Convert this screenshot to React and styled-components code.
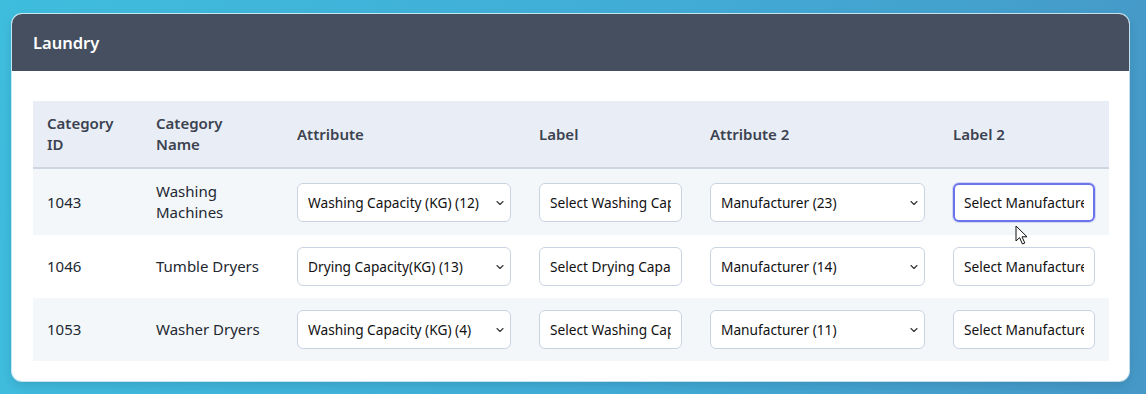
import React from 'react'
import styled, { createGlobalStyle } from 'styled-components'
import { ChevronDown } from 'lucide-react'

const rows = [
  { id: '1043', name: 'Washing Machines', attr: 'Washing Capacity (KG) (12)', label: 'Select Washing Capacity', attr2: 'Manufacturer (23)', label2: 'Select Manufacturer', focused: true },
  { id: '1046', name: 'Tumble Dryers', attr: 'Drying Capacity(KG) (13)', label: 'Select Drying Capacity', attr2: 'Manufacturer (14)', label2: 'Select Manufacturer' },
  { id: '1053', name: 'Washer Dryers', attr: 'Washing Capacity (KG) (4)', label: 'Select Washing Capacity', attr2: 'Manufacturer (11)', label2: 'Select Manufacturer' },
]

const widths = [109, 141, 242, 171, 243, 170]

const App = () => {
  return (
    <Page>
      <GlobalStyle />
      <Card>
        <CardHeader>Laundry</CardHeader>
        <CardBody>
          <Table>
            <colgroup>
              {widths.map((w, i) => <col key={i} style={{ width: w }} />)}
            </colgroup>
            <thead>
              <tr>
                <Th>Category ID</Th>
                <Th>Category Name</Th>
                <Th>Attribute</Th>
                <Th>Label</Th>
                <Th>Attribute 2</Th>
                <Th>Label 2</Th>
              </tr>
            </thead>
            <tbody>
              {rows.map((r, i) => (
                <Row key={r.id} striped={i % 2 === 0}>
                  <Td>{r.id}</Td>
                  <Td>{r.name}</Td>
                  <Td>
                    <SelectWrap>
                      <Select defaultValue={r.attr}>
                        <option>{r.attr}</option>
                      </Select>
                      <Chevron size={12} strokeWidth={2.2} />
                    </SelectWrap>
                  </Td>
                  <Td>
                    <Input readOnly value={r.label} />
                  </Td>
                  <Td>
                    <SelectWrap>
                      <Select defaultValue={r.attr2}>
                        <option>{r.attr2}</option>
                      </Select>
                      <Chevron size={12} strokeWidth={2.2} />
                    </SelectWrap>
                  </Td>
                  <Td>
                    <InputWrap>
                      <Input readOnly value={r.label2} focused={r.focused} />
                      {r.focused && (
                        <Pointer width="16" height="22" viewBox="0 0 16 22">
                          <path d="M1 1 L1 16 L4.6 12.6 L7.4 19 L9.8 18 L7 11.8 L12 11.8 Z" fill="#fff" stroke="#111" strokeWidth="1" strokeLinejoin="round" />
                        </Pointer>
                      )}
                    </InputWrap>
                  </Td>
                </Row>
              ))}
            </tbody>
          </Table>
        </CardBody>
      </Card>
    </Page>
  )
}

const GlobalStyle = createGlobalStyle`
  html, body {
    margin: 0;
    padding: 0;
  }
  body {
    font-family: "Noto Sans", "Open Sans", sans-serif;
  }
`

const Page = styled.div`
  width: 1146px;
  height: 394px;
  box-sizing: border-box;
  padding: 14px 17px 0 12px;
  background: linear-gradient(100deg, #3fbddd 0%, #41acd6 55%, #4698c6 100%);
  overflow: hidden;
`

const Card = styled.section`
  width: 1117px;
  background: #fff;
  border-radius: 10px;
  overflow: hidden;
  box-shadow: 0 0 0 1px rgba(255, 255, 255, 0.7), 0 4px 10px rgba(20, 60, 90, 0.18);
`

const CardHeader = styled.div`
  height: 57px;
  display: flex;
  align-items: center;
  padding-left: 21px;
  background: #454f5f;
  color: #fff;
  font-size: 16.5px;
  font-weight: 600;
`

const CardBody = styled.div`
  padding: 30px 20px 20px 21px;
`

const Table = styled.table`
  width: 1076px;
  table-layout: fixed;
  border-collapse: collapse;
`

const Th = styled.th`
  background: #e9eef6;
  text-align: left;
  font-weight: 600;
  font-size: 15px;
  line-height: 21px;
  color: #3b4250;
  padding: 12px 14px;
  border-bottom: 2px solid #cdd5e0;
  vertical-align: middle;
`

const Row = styled.tr`
  background: ${(p) => (p.striped ? '#f3f7fa' : '#fff')};
`

const Td = styled.td`
  font-size: 15px;
  line-height: 21px;
  color: #222831;
  padding: 12px 14px;
  vertical-align: middle;
`

const SelectWrap = styled.div`
  position: relative;
  width: 100%;
`

const Select = styled.select`
  appearance: none;
  width: 100%;
  height: 39px;
  box-sizing: border-box;
  border: 1px solid #c9d3e1;
  border-radius: 6px;
  background: #fff;
  padding: 0 28px 0 10px;
  font-family: "Noto Sans", "Open Sans", sans-serif;
  font-size: 13.7px;
  color: #111;
  outline: none;
`

const Chevron = styled(ChevronDown)`
  position: absolute;
  right: 5px;
  top: 14px;
  color: #333;
  pointer-events: none;
`

const InputWrap = styled.div`
  position: relative;
`

const Input = styled.input`
  width: 100%;
  height: 39px;
  box-sizing: border-box;
  border: ${(p) => (p.focused ? '2px solid #6b74e8' : '1px solid #c9d3e1')};
  box-shadow: ${(p) => (p.focused ? '0 0 0 1px rgba(107, 116, 232, 0.25)' : 'none')};
  border-radius: 6px;
  background: #fff;
  padding: 0 ${(p) => (p.focused ? '9px' : '10px')};
  font-family: "Noto Sans", "Open Sans", sans-serif;
  font-size: 13.7px;
  color: #111;
  outline: none;
`

const Pointer = styled.svg`
  position: absolute;
  left: 62px;
  top: 42px;
`

export default App
